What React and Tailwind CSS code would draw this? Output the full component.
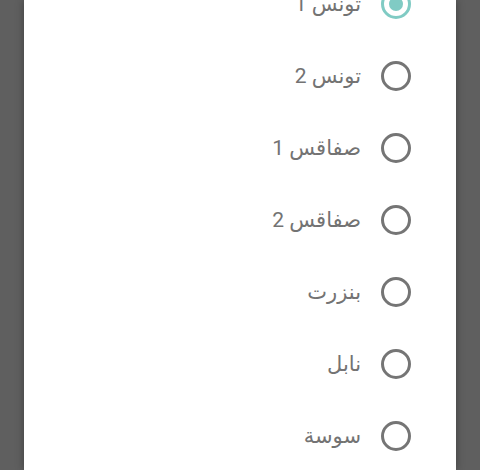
const options = [
  { id: 1, label: "تونس 1" },
  { id: 2, label: "تونس 2" },
  { id: 3, label: "صفاقس 1" },
  { id: 4, label: "صفاقس 2" },
  { id: 5, label: "بنزرت" },
  { id: 6, label: "نابل" },
  { id: 7, label: "سوسة" },
];

const Radio = ({ checked }) => (
  <span
    className={`flex h-[30px] w-[30px] shrink-0 items-center justify-center rounded-full border-[3px] ${
      checked ? "border-[#80cbc4]" : "border-[#757575]"
    }`}
  >
    {checked && <span className="h-[14px] w-[14px] rounded-full bg-[#80cbc4]" />}
  </span>
);

const App = () => {
  const selected = 1;

  return (
    <div className="flex h-[470px] w-[480px] justify-center overflow-hidden bg-[#5f5f5f]">
      <div className="h-full w-[432px] bg-white shadow-[0_0_8px_rgba(0,0,0,0.35)]">
        <ul
          dir="rtl"
          className="-mt-[32px] pr-[45px] text-[#737373]"
          style={{ fontFamily: "Roboto, 'DejaVu Sans', sans-serif" }}
        >
          {options.map((opt) => (
            <li key={opt.id} className="flex h-[72px] items-center gap-[20px]">
              <Radio checked={opt.id === selected} />
              <span className="text-[21px] leading-none">{opt.label}</span>
            </li>
          ))}
        </ul>
      </div>
    </div>
  );
};

export default App;
